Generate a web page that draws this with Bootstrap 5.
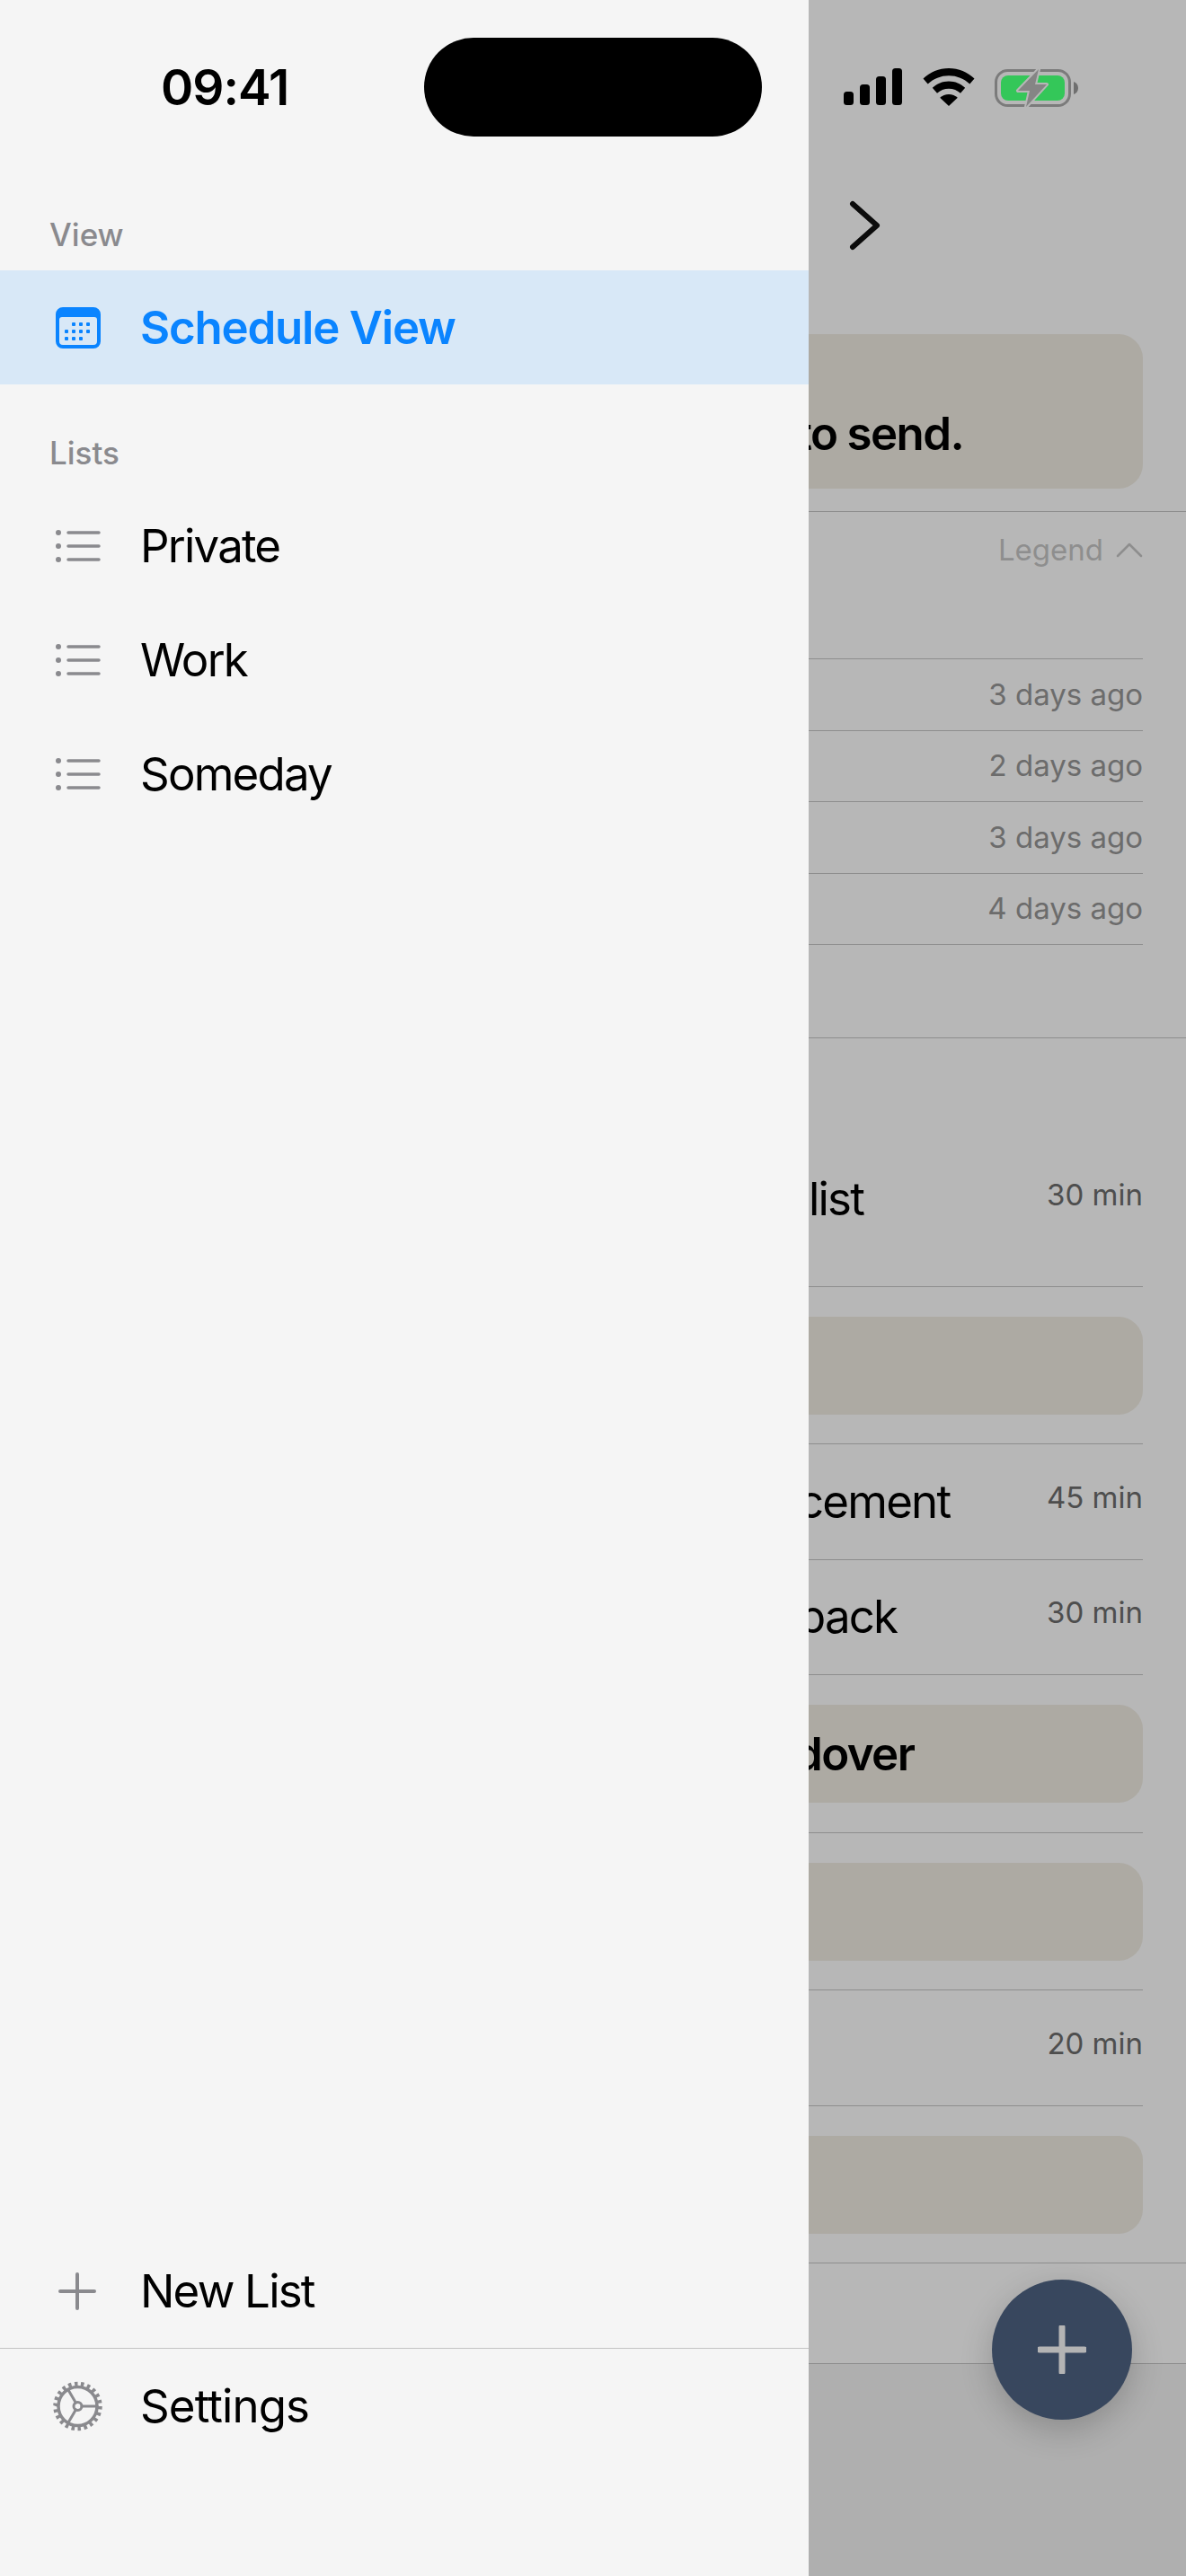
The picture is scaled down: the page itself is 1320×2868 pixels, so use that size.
<!DOCTYPE html>
<html lang="en">

<head>
  <meta charset="UTF-8">
  <meta name="viewport" content="width=device-width, initial-scale=1.0">
  <title>Schedule View</title>
  <link href="https://cdn.jsdelivr.net/npm/bootstrap@5.3.3/dist/css/bootstrap.min.css" rel="stylesheet">
  <style>
    body {
      font-family: Inter, "Liberation Sans", sans-serif;
      background: #b7b7b7;
      color: #000;
    }

    .app-frame {
      width: 1320px;
      height: 2868px;
      overflow: hidden;
    }

    /* drawer */
    .drawer {
      width: 900px;
      flex: none;
      background: #f5f5f5;
    }

    .drawer-status {
      height: 239px;
      padding: 42px 52px 0 179px;
    }

    .clock {
      width: 293px;
      font-size: 55px;
      line-height: 110px;
      font-weight: 600;
      letter-spacing: -1px;
    }

    .island {
      width: 376px;
      height: 110px;
      background: #000;
      border-radius: 55px;
    }

    .drawer-label {
      padding: 0 0 17px 55px;
      font-size: 35px;
      line-height: 45px;
      font-weight: 500;
      color: #8a8a8e;
    }

    .drawer-label-lists {
      padding-top: 54px;
    }

    .drawer-item.list-group-item {
      height: 127px;
      padding: 1px 0 0 58px;
      gap: 40px;
      background: transparent;
      border: 0;
      color: #000;
      font-size: 51px;
      letter-spacing: -1.8px;
    }

    .drawer-item.list-group-item.active {
      background: #d8e8f7;
      color: #0a84ff;
      font-weight: 600;
      letter-spacing: -1.2px;
    }

    .drawer-icon {
      width: 58px;
      flex: none;
      display: block;
    }

    .drawer-foot {
      margin-bottom: 126px;
    }

    .drawer-foot .drawer-item + .drawer-item {
      border-top: 1px solid #c4c4c4;
      height: 128px;
      letter-spacing: -.9px;
    }

    /* schedule behind the drawer */
    .sched {
      min-width: 0;
      position: relative;
      overflow: hidden;
      background: #b7b7b7;
    }

    .sched-head {
      height: 372px;
      padding-left: 39px;
    }

    .status-icons {
      height: 222px;
      padding-top: 76px;
      gap: 22px;
    }

    .nav-next {
      margin-left: 5px;
    }

    .hint-wrap {
      height: 198px;
      padding-right: 48px;
      border-bottom: 1px solid #8d8d8d;
    }

    .tint-box {
      background: #adaaa3;
      border-radius: 0 27px 27px 0;
    }

    .hint-box {
      height: 172px;
      padding-top: 80px;
    }

    .strong-text {
      font-size: 51px;
      line-height: 62px;
      font-weight: 600;
      letter-spacing: -1.6px;
    }

    .legend-row {
      height: 164px;
      margin-right: 48px;
      padding-top: 17px;
      border-bottom: 1px solid #8d8d8d;
      color: #8e8e8e;
      font-size: 33px;
      line-height: 50px;
      gap: 14px;
    }

    .ago-row {
      height: 79.5px;
      margin-right: 48px;
      border-bottom: 1px solid #8d8d8d;
      color: #6c6c6c;
      font-size: 33px;
    }

    .ago-end {
      height: 104px;
      border-bottom: 1px solid #8d8d8d;
    }

    .task-row {
      margin-right: 48px;
      border-bottom: 1px solid #8d8d8d;
      height: 128.5px;
    }

    .task-row-first {
      height: 276.5px;
      padding-top: 82px;
    }

    .task-title {
      font-size: 51px;
      line-height: 62px;
      letter-spacing: -1.8px;
      white-space: nowrap;
    }

    .task-time {
      font-size: 33px;
      line-height: 44px;
      color: #4e4e4e;
      margin-bottom: 10px;
    }

    .block-row {
      height: 175.5px;
      margin-right: 48px;
      padding-top: 33px;
      border-bottom: 1px solid #8d8d8d;
    }

    .block-row .tint-box {
      height: 109px;
    }

    .block-row-end {
      margin-right: 0;
      padding-right: 48px;
    }

    .tail-row {
      height: 112px;
      border-bottom: 1px solid #8d8d8d;
    }

    .tail-fill {
      background: #afafaf;
    }

    .fab-add {
      position: absolute;
      left: 204px;
      top: 2538px;
      width: 156px;
      height: 156px;
      padding: 0;
      border: 0;
      border-radius: 50%;
      background: #38475e;
      box-shadow: 0 12px 36px rgba(0, 0, 0, .2);
    }

    /* these titles start behind the drawer, only their tails show */
    .cut-send { margin-left: -14px; }
    .cut-list { margin-left: 0; }
    .cut-cement { margin-left: -12px; }
    .cut-back { margin-left: -12px; }
    .cut-dover { margin-left: -16px; }
  </style>
</head>

<body>
  <div class="app-frame d-flex">

    <!-- drawer -->
    <aside class="drawer d-flex flex-column">
      <div class="drawer-status d-flex align-items-start">
        <div class="clock">09:41</div>
        <div class="island"></div>
      </div>

      <div class="drawer-label">View</div>
      <div class="list-group list-group-flush">
        <a href="#" class="list-group-item drawer-item active d-flex align-items-center">
          <svg class="drawer-icon" viewBox="0 0 58 46" height="46" aria-hidden="true">
            <path fill="#0a84ff" fill-rule="evenodd" d="M12 0h34a8 8 0 0 1 8 8v30a8 8 0 0 1-8 8H12a8 8 0 0 1-8-8V8a8 8 0 0 1 8-8zM11 11a3 3 0 0 0-3 3v24a4 4 0 0 0 4 4h34a4 4 0 0 0 4-4V14a3 3 0 0 0-3-3z"/>
            <g fill="#0a84ff">
              <rect x="22" y="17" width="4" height="4" rx="1"/><rect x="30" y="17" width="4" height="4" rx="1"/><rect x="38" y="17" width="4" height="4" rx="1"/>
              <rect x="14" y="25" width="4" height="4" rx="1"/><rect x="22" y="25" width="4" height="4" rx="1"/><rect x="30" y="25" width="4" height="4" rx="1"/><rect x="38" y="25" width="4" height="4" rx="1"/>
              <rect x="14" y="33" width="4" height="4" rx="1"/><rect x="22" y="33" width="4" height="4" rx="1"/><rect x="30" y="33" width="4" height="4" rx="1"/>
            </g>
          </svg>
          Schedule View
        </a>
      </div>

      <div class="drawer-label drawer-label-lists">Lists</div>
      <div class="list-group list-group-flush">
        <a href="#" class="list-group-item drawer-item d-flex align-items-center">
          <svg class="drawer-icon" viewBox="0 0 58 40" height="40" aria-hidden="true">
            <g fill="#8a8a8e"><circle cx="7" cy="5" r="3"/><circle cx="7" cy="20" r="3"/><circle cx="7" cy="35" r="3"/></g>
            <path stroke="#8a8a8e" stroke-width="3.500" stroke-linecap="round" d="M18 5h34M18 20h34M18 35h34"/>
          </svg>
          Private
        </a>
        <a href="#" class="list-group-item drawer-item d-flex align-items-center">
          <svg class="drawer-icon" viewBox="0 0 58 40" height="40" aria-hidden="true">
            <g fill="#8a8a8e"><circle cx="7" cy="5" r="3"/><circle cx="7" cy="20" r="3"/><circle cx="7" cy="35" r="3"/></g>
            <path stroke="#8a8a8e" stroke-width="3.500" stroke-linecap="round" d="M18 5h34M18 20h34M18 35h34"/>
          </svg>
          Work
        </a>
        <a href="#" class="list-group-item drawer-item d-flex align-items-center">
          <svg class="drawer-icon" viewBox="0 0 58 40" height="40" aria-hidden="true">
            <g fill="#8a8a8e"><circle cx="7" cy="5" r="3"/><circle cx="7" cy="20" r="3"/><circle cx="7" cy="35" r="3"/></g>
            <path stroke="#8a8a8e" stroke-width="3.500" stroke-linecap="round" d="M18 5h34M18 20h34M18 35h34"/>
          </svg>
          Someday
        </a>
      </div>

      <div class="list-group list-group-flush drawer-foot mt-auto">
        <a href="#" class="list-group-item drawer-item d-flex align-items-center">
          <svg class="drawer-icon" viewBox="0 0 58 42" height="42" aria-hidden="true">
            <path stroke="#8a8a8e" stroke-width="4" stroke-linecap="round" d="M28 2v38M9 21h38"/>
          </svg>
          New List
        </a>
        <a href="#" class="list-group-item drawer-item d-flex align-items-center">
          <svg class="drawer-icon" viewBox="0 0 58 56" height="56" aria-hidden="true">
            <circle cx="28.500" cy="28" r="21.500" fill="none" stroke="#8a8a8e" stroke-width="3.500"/>
            <circle cx="28.500" cy="28" r="24.500" fill="none" stroke="#8a8a8e" stroke-width="5.500" stroke-dasharray="0.500 0.500" pathLength="22"/>
            <circle cx="28.500" cy="28" r="4.500" fill="none" stroke="#8a8a8e" stroke-width="3"/>
            <path stroke="#8a8a8e" stroke-width="3" stroke-linecap="round" d="M33 28h17M26.300 24.100l-8.500-14.700M26.300 31.900l-8.500 14.700"/>
          </svg>
          Settings
        </a>
      </div>
    </aside>

    <!-- schedule, dimmed behind the drawer -->
    <main class="sched flex-grow-1 d-flex flex-column">
      <div class="sched-head">
        <div class="status-icons d-flex align-items-start">
          <svg width="66" height="42" viewBox="0 0 66 42" aria-hidden="true">
            <rect x="0" y="26" width="11" height="15" rx="3.500"/><rect x="18" y="18" width="11" height="23" rx="3.500"/><rect x="36" y="9" width="11" height="32" rx="3.500"/><rect x="54" y="0" width="11" height="41" rx="3.500"/>
          </svg>
          <svg width="58" height="42" viewBox="0 0 58 42" aria-hidden="true">
            <path d="M29 0c11 0 21 4.400 28.500 11.600l-5.200 6C46 11.700 38 8.300 29 8.300S12 11.700 5.700 17.600l-5.200-6C8 4.400 18 0 29 0z"/>
            <path d="M29 14.500c7 0 13.400 2.800 18.200 7.300l-5.200 6c-3.400-3.200-8-5.100-13-5.100s-9.600 1.900-13 5.100l-5.200-6c4.800-4.500 11.200-7.300 18.200-7.300z"/>
            <path d="M29 29c3.800 0 7.200 1.400 9.800 3.800L29 42l-9.800-9.200c2.600-2.400 6-3.800 9.800-3.800z"/>
          </svg>
          <svg width="94" height="44" viewBox="0 0 94 44" aria-hidden="true">
            <rect x="1.500" y="2.500" width="82" height="39" rx="13" fill="none" stroke="#7b7b7b" stroke-width="3"/>
            <rect x="7" y="8" width="71" height="28" rx="8" fill="#34c759"/>
            <path d="M88 15c3 1 5 3.500 5 7s-2 6-5 7z" fill="#6f6f6f"/>
            <path d="M49 1L26 25h13l-4 18 23-25H45z" fill="#858585" stroke="#b7b7b7" stroke-width="4" stroke-linejoin="round" paint-order="stroke"/>
          </svg>
        </div>
        <svg width="40" height="62" viewBox="0 0 40 62" class="d-block nav-next" aria-hidden="true">
          <path d="M5 5l27 24L5 53" fill="none" stroke="#0b0b0b" stroke-width="6" stroke-linecap="round" stroke-linejoin="round"/>
        </svg>
      </div>
      <div class="hint-wrap">
        <div class="tint-box hint-box">
          <div class="strong-text cut-send">to send.</div>
        </div>
      </div>

      <div class="legend-row d-flex justify-content-end align-items-start">
        <span>Legend</span>
        <svg width="30" height="18" viewBox="0 0 30 18" class="mt-3" aria-hidden="true">
          <path d="M2 16L15 3l13 13" fill="none" stroke="#8e8e8e" stroke-width="2.500" stroke-linecap="round" stroke-linejoin="round"/>
        </svg>
      </div>
      <div class="ago-row d-flex justify-content-end align-items-center">3 days ago</div>
      <div class="ago-row d-flex justify-content-end align-items-center">2 days ago</div>
      <div class="ago-row d-flex justify-content-end align-items-center">3 days ago</div>
      <div class="ago-row d-flex justify-content-end align-items-center">4 days ago</div>
      <div class="ago-end"></div>

      <div class="task-row task-row-first d-flex justify-content-between align-items-center">
        <span class="task-title cut-list">list</span>
        <span class="task-time">30 min</span>
      </div>
      <div class="block-row"><div class="tint-box"></div></div>
      <div class="task-row d-flex justify-content-between align-items-center">
        <span class="task-title cut-cement">cement</span>
        <span class="task-time">45 min</span>
      </div>
      <div class="task-row d-flex justify-content-between align-items-center">
        <span class="task-title cut-back">back</span>
        <span class="task-time">30 min</span>
      </div>
      <div class="block-row">
        <div class="tint-box d-flex align-items-center"><span class="strong-text cut-dover">dover</span></div>
      </div>
      <div class="block-row"><div class="tint-box"></div></div>
      <div class="task-row d-flex justify-content-end align-items-center">
        <span class="task-time">20 min</span>
      </div>
      <div class="block-row block-row-end"><div class="tint-box"></div></div>
      <div class="tail-row"></div>
      <div class="tail-fill flex-grow-1"></div>

      <button type="button" class="fab-add" aria-label="Add">
        <svg width="54" height="54" viewBox="0 0 54 54" class="d-block mx-auto" aria-hidden="true">
          <path d="M27 2v50M2 27h50" stroke="#b4b4b4" stroke-width="7" stroke-linecap="round"/>
        </svg>
      </button>
    </main>
  </div>

  <script src="https://cdn.jsdelivr.net/npm/bootstrap@5.3.3/dist/js/bootstrap.bundle.min.js"></script>
</body>

</html>
